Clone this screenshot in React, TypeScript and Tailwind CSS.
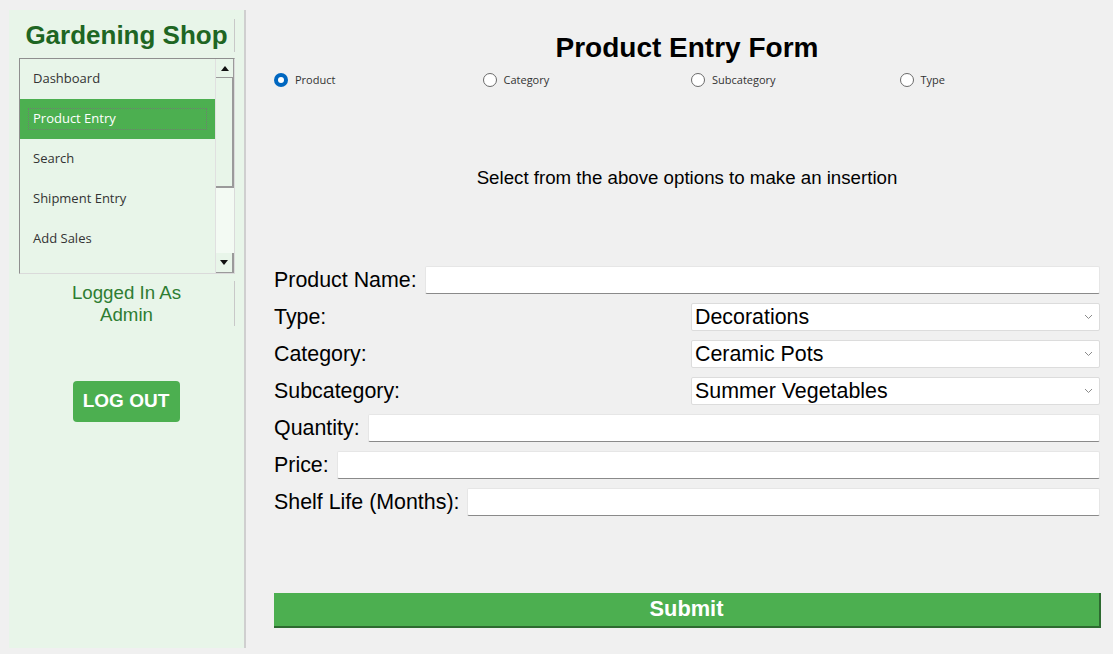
const navItems = ["Dashboard", "Product Entry", "Search", "Shipment Entry", "Add Sales"];
const radios = ["Product", "Category", "Subcategory", "Type"];

const uiFont = { fontFamily: '"Open Sans", "Noto Sans", sans-serif' };

const TextRow = ({ label }: { label: string }) => (
  <div className="flex items-center gap-2 h-[28px]">
    <span className="whitespace-nowrap">{label}</span>
    <div className="flex-1 h-[28px] bg-white border border-[#e6e6e6] border-b-[#8a8a8a] rounded-[2px]" />
  </div>
);

const SelectRow = ({ label, value }: { label: string; value: string }) => (
  <div className="flex items-center justify-between h-[28px]">
    <span>{label}</span>
    <div className="w-[409px] h-[28px] bg-white border border-[#dcdcdc] rounded-[2px] flex items-center justify-between pl-[3px] pr-[6px]">
      <span>{value}</span>
      <svg width="9" height="6" viewBox="0 0 9 6" fill="none">
        <path d="M1 1l3.5 3.5L8 1" stroke="#8a8a8a" strokeWidth="1" />
      </svg>
    </div>
  </div>
);

export default function App() {
  return (
    <div
      className="w-[1113px] h-[654px] bg-[#f0f0f0] flex text-black"
      style={{ fontFamily: '"Liberation Sans", Arial, sans-serif' }}
    >
      {/* Sidebar */}
      <aside className="ml-[9px] mt-[10px] w-[237px] h-[638px] bg-[#e8f5e9] border-r-2 border-[#cfcfcf] flex flex-col">
        <div className="mx-[10px] mt-[9px] w-[216px] h-[33px] border-r border-[#c8c8c8] flex items-center justify-center text-[26px] font-bold text-[#1e6623]">
          Gardening Shop
        </div>

        {/* Listbox */}
        <div className="mx-[10px] mt-[6px] w-[216px] h-[216px] border border-[#8f8f8f] border-r-[#dadada] border-b-[#dadada] flex overflow-hidden">
          <div className="flex-1" style={uiFont}>
            {navItems.map((item) => (
              <div
                key={item}
                className={`h-[40px] flex items-center text-[13px] ${
                  item === "Product Entry" ? "bg-[#4caf50] text-white px-[8px]" : "text-[#333] px-[13px]"
                }`}
              >
                {item === "Product Entry" ? (
                  <span className="w-full h-[22px] border border-dotted border-[#6f7f6f] flex items-center px-[4px]">
                    {item}
                  </span>
                ) : (
                  item
                )}
              </div>
            ))}
          </div>
          <div className="w-[19px] flex flex-col bg-[#f3faf3] border-l border-[#e0e0e0]">
            <div className="h-[19px] bg-[#e8f5e9] border-b border-r border-[#9a9a9a] flex items-center justify-center">
              <svg width="8" height="5" viewBox="0 0 8 5"><path d="M0 5L4 0L8 5Z" fill="#111" /></svg>
            </div>
            <div className="h-[110px] bg-[#e8f5e9] border-r-2 border-b-2 border-[#9a9a9a]" />
            <div className="flex-1" />
            <div className="h-[20px] bg-[#e8f5e9] border-r-2 border-b border-[#9a9a9a] flex items-center justify-center">
              <svg width="8" height="5" viewBox="0 0 8 5"><path d="M0 0L8 0L4 5Z" fill="#111" /></svg>
            </div>
          </div>
        </div>

        <div className="mx-[10px] mt-[7px] w-[216px] h-[45px] border-r border-[#c8c8c8] flex flex-col items-center justify-center text-[18.7px] leading-[22px] text-[#2e7d32]">
          <span>Logged In As</span>
          <span>Admin</span>
        </div>

        <div className="mt-[55px] flex justify-center pr-[1px]">
          <button className="w-[107px] h-[41px] bg-[#4caf50] rounded-[4px] text-white font-bold text-[19px]">
            LOG OUT
          </button>
        </div>
      </aside>

      {/* Main */}
      <main className="ml-[28px] w-[826px] flex flex-col">
        <h1 className="mt-[32px] h-[32px] text-center text-[28px] font-bold leading-[32px]">Product Entry Form</h1>

        <div className="mt-[9px] flex h-[14px]" style={uiFont}>
          {radios.map((r, i) => (
            <div key={r} className="w-[208.5px] flex items-center gap-[7px] shrink-0">
              {i === 0 ? (
                <span className="w-[14px] h-[14px] rounded-full bg-[#0067c0] flex items-center justify-center">
                  <span className="w-[6px] h-[6px] rounded-full bg-white" />
                </span>
              ) : (
                <span className="w-[14px] h-[14px] rounded-full bg-white border border-[#6a6a6a]" />
              )}
              <span className="text-[11px] text-[#333]">{r}</span>
            </div>
          ))}
        </div>

        <p className="mt-[80px] text-center text-[18.7px] leading-[22px]">
          Select from the above options to make an insertion
        </p>

        <div className="mt-[77px] flex flex-col gap-[9px] text-[21.4px]">
          <TextRow label="Product Name:" />
          <SelectRow label="Type:" value="Decorations" />
          <SelectRow label="Category:" value="Ceramic Pots" />
          <SelectRow label="Subcategory:" value="Summer Vegetables" />
          <TextRow label="Quantity:" />
          <TextRow label="Price:" />
          <TextRow label="Shelf Life (Months):" />
        </div>

        <button className="mt-[77px] h-[35px] w-[827px] bg-[#4caf50] border-b-2 border-r-2 border-[#2d6a30] text-white font-bold text-[21.8px]">
          Submit
        </button>
      </main>
    </div>
  );
}
